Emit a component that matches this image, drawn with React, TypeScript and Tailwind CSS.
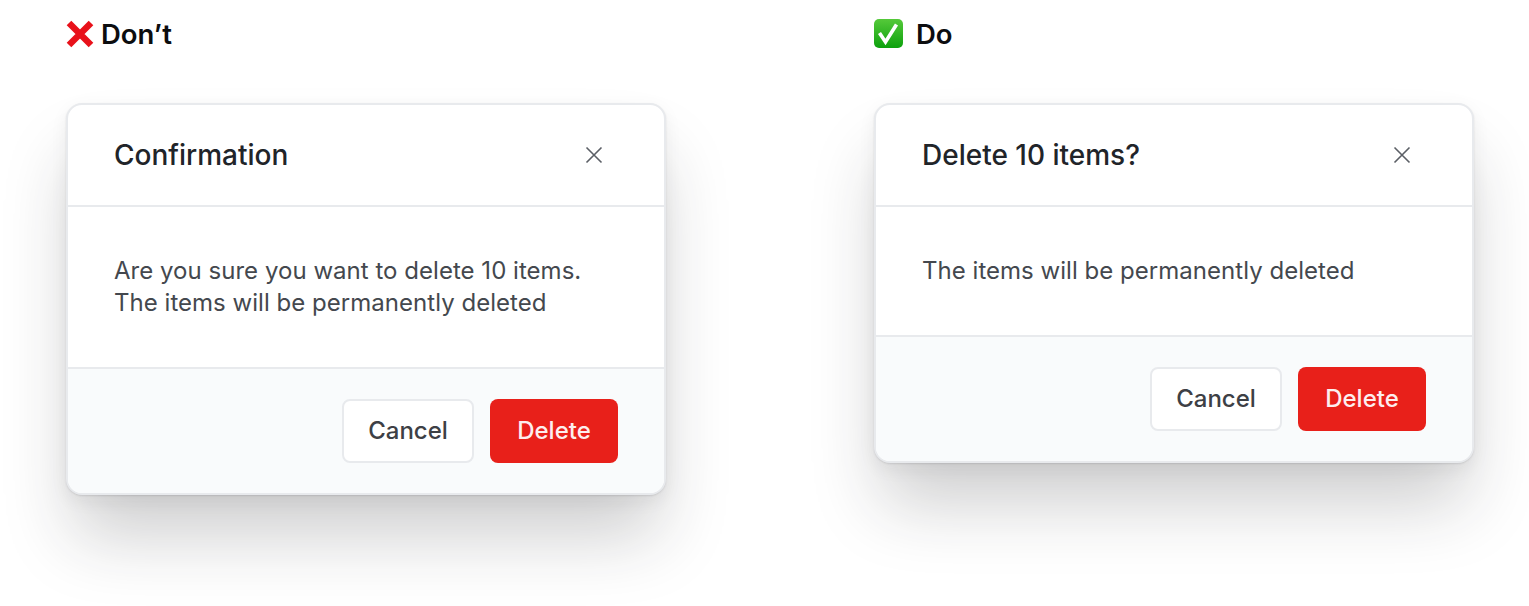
const fontStack = { fontFamily: 'Inter, "Noto Sans", sans-serif' }

function CrossIcon() {
  return (
    <svg width="30" height="30" viewBox="0 0 30 30" className="shrink-0">
      <path d="M3 4 L25 26 M25 4 L3 26" fill="none" stroke="#e8111a" strokeWidth="6.5" />
    </svg>
  )
}

function CheckIcon() {
  return (
    <svg width="30" height="30" viewBox="0 0 30 30" className="shrink-0">
      <defs>
        <linearGradient id="checkBg" x1="0" y1="0" x2="0" y2="1">
          <stop offset="0" stopColor="#55c93a" />
          <stop offset="1" stopColor="#0da10d" />
        </linearGradient>
      </defs>
      <rect x="0" y="0" width="29" height="29" rx="5" fill="url(#checkBg)" />
      <path d="M5.5 14 L11.5 23 L22.5 5.5" fill="none" stroke="#ffffff" strokeWidth="3.6" />
    </svg>
  )
}

function CloseIcon() {
  return (
    <svg width="18" height="18" viewBox="0 0 18 18">
      <path d="M1.5 1.5 L16.5 16.5 M16.5 1.5 L1.5 16.5" stroke="#5b5f66" strokeWidth="1.6" fill="none" />
    </svg>
  )
}

function DialogCard({ title, lines }: { title: string; lines: string[] }) {
  return (
    <div className="w-[600px] rounded-[16px] border-2 border-[#e8eaed] bg-white shadow-[0_48px_70px_-8px_rgba(30,30,35,0.22),0_6px_18px_rgba(30,30,35,0.06),0_1px_2px_rgba(30,35,45,0.12)] overflow-hidden">
      <div className="flex h-[102px] items-center justify-between border-b-2 border-[#e8eaed] pl-[46px] pr-[61px]">
        <h2 className="text-[28px] font-medium text-[#212429]">{title}</h2>
        <CloseIcon />
      </div>
      <div className="px-[46px] py-[48px] text-[24px] leading-[32px] tracking-[0.03px] text-[#44484e]">
        {lines.map(line => (
          <p key={line}>{line}</p>
        ))}
      </div>
      <div className="flex justify-end gap-4 border-t-2 border-[#e8eaed] bg-[#f9fbfc] pt-[30px] pb-[30px] pr-[46px]">
        <button className="h-[64px] w-[132px] rounded-[8px] border-2 border-[#e8eaed] bg-white text-[24px] font-medium text-[#3d4045]">
          Cancel
        </button>
        <button className="h-[64px] w-[128px] rounded-[8px] bg-[#e8201a] text-[24px] font-medium text-[#fdeeee]">
          Delete
        </button>
      </div>
    </div>
  )
}

export default function App() {
  return (
    <div className="h-[606px] w-[1529px] overflow-hidden bg-white" style={fontStack}>
      <div className="flex items-start gap-[208px] pl-[66px] pt-[18px]">
        <div>
          <div className="flex h-[32px] items-center gap-[5px] text-[27.5px] font-semibold text-[#0c0d0f]">
            <CrossIcon />
            <span className="pt-[2px]">Don’t</span>
          </div>
          <div className="mt-[53px]">
            <DialogCard
              title="Confirmation"
              lines={['Are you sure you want to delete 10 items.', 'The items will be permanently deleted']}
            />
          </div>
        </div>
        <div>
          <div className="flex h-[32px] items-center gap-[12px] text-[27.5px] font-semibold text-[#0c0d0f]">
            <CheckIcon />
            <span className="pt-[2px]">Do</span>
          </div>
          <div className="mt-[53px]">
            <DialogCard title="Delete 10 items?" lines={['The items will be permanently deleted']} />
          </div>
        </div>
      </div>
    </div>
  )
}
